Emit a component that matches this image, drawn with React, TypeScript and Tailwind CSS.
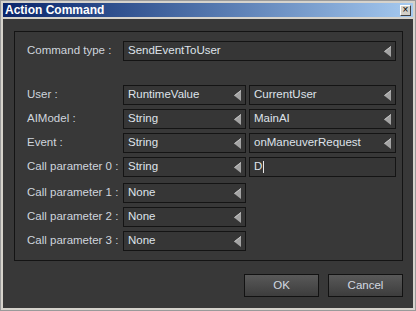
import React from "react";

function Arrow() {
  return (
    <svg width="7" height="11" viewBox="0 0 7 11" className="shrink-0">
      <polygon points="7,0 0,5.5 7,11" fill="#a4a4a4" />
      <polyline points="7,0.5 0.6,5.5" stroke="#c4c4c4" strokeWidth="1" fill="none" />
    </svg>
  );
}

function Box({ text, w, arrow = true, cursor = false }: { text: string; w: string; arrow?: boolean; cursor?: boolean }) {
  return (
    <div className={`${w} h-[20px] border border-[#141414] bg-[#363636] flex items-center justify-between pl-[4px] pr-[4px]`}>
      <span className="flex items-center text-[#dfe3ea]">
        {text}
        {cursor && <span className="ml-[1px] w-[1px] h-[12px] bg-[#e8e8e8] inline-block" />}
      </span>
      {arrow && <Arrow />}
    </div>
  );
}

function Row({ label, children, mt }: { label: string; children: React.ReactNode; mt: string }) {
  return (
    <div className={`flex items-center h-[20px] ${mt}`}>
      <div className="w-[96px] text-[#cfd5dd]">{label}</div>
      <div className="flex gap-[3px]">{children}</div>
    </div>
  );
}

export default function App() {
  return (
    <div className="w-[416px] h-[311px] border border-[#9a9a9a] bg-[#d6d3cc] p-[2px] flex flex-col font-['Liberation_Sans',Arial,sans-serif] text-[11.5px] leading-none select-none">
      <div className="h-[14px] shrink-0 bg-gradient-to-r from-[#0a246a] to-[#a6caf0] flex items-center justify-between pl-[2px] pr-[2px]">
        <span className="text-white font-bold text-[12px]">Action Command</span>
        <div className="w-[11px] h-[11px] bg-[#d4d0c8] border-t border-l border-[#ffffff] border-r border-b border-r-[#404040] border-b-[#404040] flex items-center justify-center text-black text-[10px] leading-none">
          ×
        </div>
      </div>
      <div className="mt-[2px] flex-1 bg-[#383838] pl-[11px] pr-[10px] pt-[12px] flex flex-col">
        <div className="h-[230px] border border-[#141414] pl-[12px] pr-[6px] pt-[9px] flex flex-col">
          <div className="flex items-center h-[20px]">
            <div className="w-[96px] text-[#cfd5dd]">Command type :</div>
            <Box text="SendEventToUser" w="w-[273px]" />
          </div>
          <Row label="User :" mt="mt-[24px]">
            <Box text="RuntimeValue" w="w-[123px]" />
            <Box text="CurrentUser" w="w-[147px]" />
          </Row>
          <Row label="AIModel :" mt="mt-[4px]">
            <Box text="String" w="w-[123px]" />
            <Box text="MainAI" w="w-[147px]" />
          </Row>
          <Row label="Event :" mt="mt-[4px]">
            <Box text="String" w="w-[123px]" />
            <Box text="onManeuverRequest" w="w-[147px]" />
          </Row>
          <Row label="Call parameter 0 :" mt="mt-[4px]">
            <Box text="String" w="w-[123px]" />
            <Box text="D" w="w-[147px]" arrow={false} cursor />
          </Row>
          <Row label="Call parameter 1 :" mt="mt-[6px]">
            <Box text="None" w="w-[123px]" />
          </Row>
          <Row label="Call parameter 2 :" mt="mt-[4px]">
            <Box text="None" w="w-[123px]" />
          </Row>
          <Row label="Call parameter 3 :" mt="mt-[4px]">
            <Box text="None" w="w-[123px]" />
          </Row>
        </div>
        <div className="mt-[13px] flex justify-end gap-[9px]">
          <button className="w-[75px] h-[23px] border border-[#121212] bg-gradient-to-b from-[#595959] to-[#3d3d3d] text-[#d3d9e1] flex items-center justify-center">
            OK
          </button>
          <button className="w-[75px] h-[23px] border border-[#121212] bg-gradient-to-b from-[#595959] to-[#3d3d3d] text-[#d3d9e1] flex items-center justify-center">
            Cancel
          </button>
        </div>
      </div>
    </div>
  );
}
